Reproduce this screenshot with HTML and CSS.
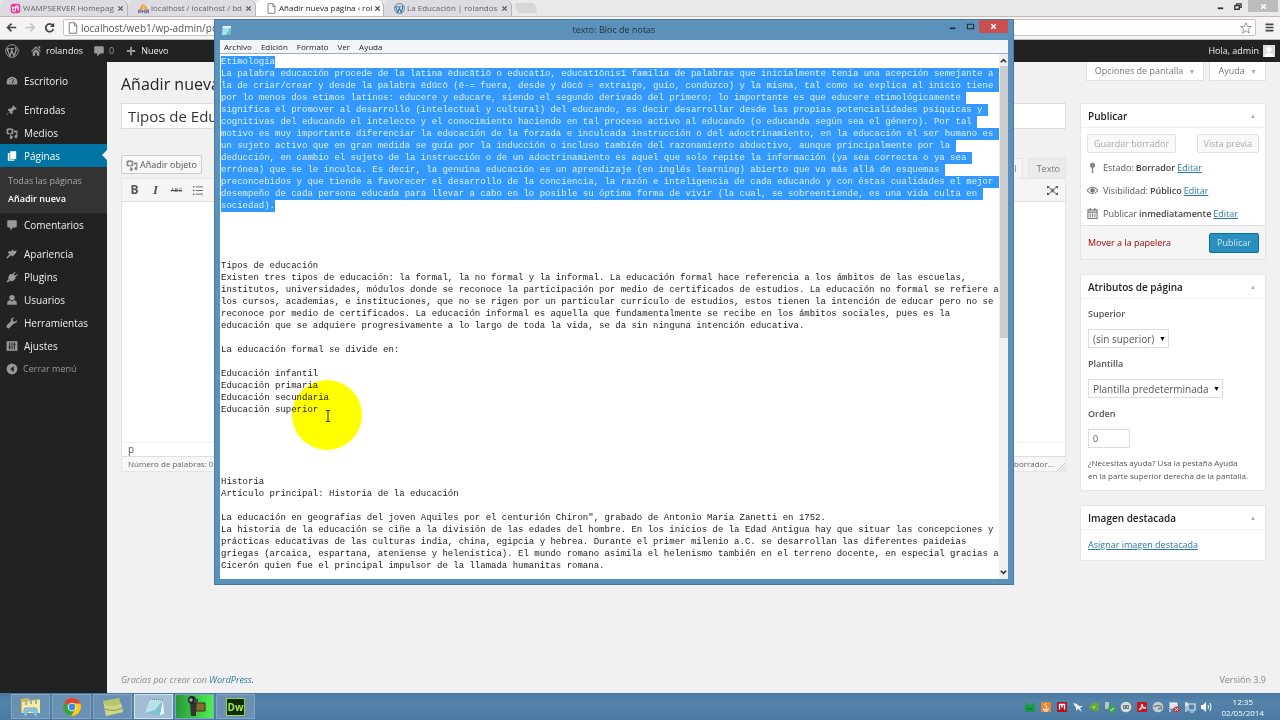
FILE: index.html
```html
<!DOCTYPE html>
<html lang="es">
<head>
<meta charset="utf-8">
<title>Añadir nueva página ‹ rolandos</title>
<link rel="stylesheet" href="styles.css">
</head>
<body>
<svg class="defs" aria-hidden="true">
  <symbol id="doc" viewBox="0 0 16 16"><path d="M3 1h7l3 3v11H3z M10 1v4h3" fill="#fff" stroke="#777" stroke-width="1.3"/></symbol>
  <symbol id="wp" viewBox="0 0 20 20"><circle cx="10" cy="10" r="9" fill="none" stroke="currentColor" stroke-width="1.400"/><path d="M2.800 6.500L7 17l2.800-7.500L13 17l2.500-7q1-3-1-5.500M2.800 6.700h4M8 6.700h4.500M8.500 6.700L10 10" fill="none" stroke="currentColor" stroke-width="1.900"/></symbol>
  <symbol id="comment" viewBox="0 0 20 20"><path d="M4 2h12q2 0 2 2v8q0 2-2 2h-4l-5 5v-5H4q-2 0-2-2V4q0-2 2-2z" fill="currentColor"/></symbol>
  <symbol id="media" viewBox="0 0 20 20"><path d="M1 3h2l1-1h4l1 1h3v9H1z M6.500 4.500a3 3 0 1 0 .1 0" fill="currentColor" fill-rule="evenodd"/><path d="M13 6h6v10a2.500 2.500 0 1 1-2-2.400V9h-4zM9 13v2h2v2.500a2.300 2.300 0 1 1-4-1.500V13z" fill="currentColor"/></symbol>
</svg>

<header class="tabstrip">
  <div class="tab"><svg viewBox="0 0 16 16"><rect x="1" y="1" width="14" height="14" rx="4" fill="#e5399c"/><path d="M4 5v5q0 2 2 2t2-2V6q0-2 2-2t2 2v5M4 7h8" fill="none" stroke="#fff" stroke-width="1.500"/></svg><span>WAMPSERVER Homepag</span><button aria-label="Cerrar"><svg viewBox="0 0 8 8"><path d="M1.500 1.500l5 5m0-5l-5 5" stroke="#555" stroke-width="1.400"/></svg></button></div>
  <div class="tab"><svg viewBox="0 0 16 16"><path d="M3 9Q4 2 8 1v8zM9 2q5 3 4 7H9z" fill="#f3a52c"/><path d="M1 15v-5h3v3H1M6 15v-5l2 3 2-3v5M12 15v-5h3v5M12 13h3" fill="none" stroke="#5d5f8d" stroke-width="1.400"/></svg><span>localhost / localhost / bd</span><button aria-label="Cerrar"><svg viewBox="0 0 8 8"><path d="M1.500 1.500l5 5m0-5l-5 5" stroke="#555" stroke-width="1.400"/></svg></button></div>
  <div class="tab active"><svg><use href="#doc"/></svg><span>Añadir nueva página ‹ rol</span><button aria-label="Cerrar"><svg viewBox="0 0 8 8"><path d="M1.500 1.500l5 5m0-5l-5 5" stroke="#444" stroke-width="1.400"/></svg></button></div>
  <div class="tab"><svg class="blue"><use href="#wp"/></svg><span>La Educación | rolandos</span><button aria-label="Cerrar"><svg viewBox="0 0 8 8"><path d="M1.500 1.500l5 5m0-5l-5 5" stroke="#555" stroke-width="1.400"/></svg></button></div>
  <button class="newtab" aria-label="Nueva pestaña"></button>
  <div class="chrome-controls">
    <button aria-label="Minimizar"><svg viewBox="0 0 10 10"><path d="M2 7h6" stroke="#333" stroke-width="2"/></svg></button>
    <button aria-label="Restaurar"><svg viewBox="0 0 10 10"><path d="M2 4h5v4H2zM4 4V2h5v4H7" fill="none" stroke="#333" stroke-width="1.500"/></svg></button>
    <button class="close" aria-label="Cerrar"><svg viewBox="0 0 10 10"><path d="M2.500 2.500l5 5m0-5l-5 5" stroke="#fff" stroke-width="1.700"/></svg></button>
  </div>
</header>

<div class="toolbar">
  <button aria-label="Atrás"><svg viewBox="0 0 14 14"><path d="M13 7H3M7 2L2 7l5 5" fill="none" stroke="#444" stroke-width="2.200"/></svg></button>
  <button aria-label="Adelante"><svg viewBox="0 0 14 14"><path d="M1 7h10M7 2l5 5-5 5" fill="none" stroke="#c4c4c4" stroke-width="2"/></svg></button>
  <button aria-label="Recargar"><svg viewBox="0 0 14 14"><path d="M11 4a5 5 0 1 0 1 5" fill="none" stroke="#444" stroke-width="2.200"/><path d="M13 1v5.500H7.500z" fill="#444"/></svg></button>
  <div class="omnibox"><svg><use href="#doc"/></svg><input aria-label="Dirección" value="localhost/web1/wp-admin/post-new.php?post_type=page"><svg class="star" viewBox="0 0 16 16"><path d="M8 1l2 5h5l-4 3.500L12.500 15 8 11.500 3.500 15 5 9.500 1 6h5z" fill="#fff" stroke="#777"/></svg></div>
  <button aria-label="Menú"><svg viewBox="0 0 14 14"><path d="M2 3h10M2 7h10M2 11h10" stroke="#444" stroke-width="2.200"/></svg></button>
</div>

<nav class="adminbar">
  <a href="#" aria-label="WordPress"><svg class="big"><use href="#wp"/></svg></a>
  <a href="#" class="site"><svg viewBox="0 0 20 20"><path d="M10 2l8 8-1 1.500-7-6.500-7 6.500L2 10zM14 2h3v5l-3-3z" fill="currentColor"/><path d="M10 7l5.500 5v6h-4v-5h-3v5h-4v-6z" fill="currentColor"/></svg>rolandos</a>
  <a href="#" class="count"><svg><use href="#comment"/></svg>0</a>
  <a href="#" class="new"><svg viewBox="0 0 20 20"><path d="M10 3v14M3 10h14" stroke="currentColor" stroke-width="3"/></svg>Nuevo</a>
  <a href="#" class="user">Hola, admin<svg viewBox="0 0 12 12"><path d="M0 0h12v12H0z" fill="#ddd"/><circle cx="6" cy="4.500" r="2.500" fill="#fff"/><path d="M1.500 12q0-4 4.500-4t4.500 4z" fill="#fff"/></svg></a>
</nav>

<div class="page">
  <nav class="menu">
    <a href="#"><svg viewBox="0 0 20 20"><path d="M10 3a9 9 0 0 0-8 13h16A9 9 0 0 0 10 3z" fill="currentColor"/><path d="M10 14l3-7M5 12h1M6 7l1 1M10 5v2M14 12h1" stroke="#222" stroke-width="1.600"/></svg>Escritorio</a>
    <a href="#" class="sep"><svg viewBox="0 0 20 20"><path d="M12 2l6 6-2 1-2 0-3 3 0 4-2 1-3.500-3.500L2 18l-1-1 5-4L3 10l1-2h4l3-3V3z" fill="currentColor"/></svg>Entradas</a>
    <a href="#"><svg><use href="#media"/></svg>Medios</a>
    <a href="#" class="current"><svg viewBox="0 0 20 20"><path d="M7 2h10v13H7z" fill="#fff"/><path d="M3 5h3v11h8v2H3z" fill="#fff"/></svg>Páginas</a>
    <div class="submenu"><a href="#">Todas las páginas</a><a href="#" class="on">Añadir nueva</a></div>
    <a href="#"><svg><use href="#comment"/></svg>Comentarios</a>
    <a href="#" class="sep"><svg viewBox="0 0 20 20"><path d="M10 2l3 3 5-1-2 5-5 5-3-2-6 6-1-2 5-6-3-2 2-3 4 1z" fill="currentColor"/></svg>Apariencia</a>
    <a href="#"><svg viewBox="0 0 20 20"><path d="M11 5l4-4 1 1-3 4 2 2 4-3 1 1-4 4q0 6-7 7l-2-1-4 3-2-2 3-3q-1-5 3-9z" fill="currentColor"/></svg>Plugins</a>
    <a href="#"><svg viewBox="0 0 20 20"><circle cx="10" cy="6" r="4.500" fill="currentColor"/><path d="M2 18v-4q0-3 5-4l3 3 3-3q5 1 5 4v4z" fill="currentColor"/></svg>Usuarios</a>
    <a href="#"><svg viewBox="0 0 20 20"><path d="M18 5l-3 3-3-1-1-3 3-3q-6-1-6 6L1 14q-1 2 1 4t4 0l7-7q6 0 5-6z" fill="currentColor"/></svg>Herramientas</a>
    <a href="#"><svg viewBox="0 0 20 20"><path d="M1 2h18v16H1z" fill="currentColor"/><path d="M6 4v12M14 4v12M10 4v12M4 12h4M12 7h4" stroke="#222" stroke-width="1.700"/></svg>Ajustes</a>
    <button class="collapse"><svg viewBox="0 0 20 20"><circle cx="10" cy="10" r="9" fill="currentColor"/><path d="M13 5v10l-6-5z" fill="#222"/></svg>Cerrar menú</button>
  </nav>

  <main class="content">
    <div class="head">
      <h1>Añadir nueva página</h1>
      <button class="meta">Opciones de pantalla <i>▼</i></button>
      <button class="meta">Ayuda <i>▼</i></button>
    </div>
    <div class="columns">
      <section class="editor-col">
        <input class="title" aria-label="Título" value="Tipos de Educación">
        <div class="media-row">
          <button class="add"><svg><use href="#media"/></svg>Añadir objeto</button>
          <div class="modes"><button class="sel-mode">Visual</button><button>Texto</button></div>
        </div>
        <div class="editor">
          <div class="format">
            <button class="b">B</button><button class="i">I</button><button class="abc">ABC</button>
            <button aria-label="Lista"><svg viewBox="0 0 12 12"><path d="M4 2h8M4 6h8M4 10h8" stroke="#666"/><path d="M1 2h1.500M1 6h1.500M1 10h1.500" stroke="#666" stroke-width="1.600"/></svg></button>
            <button class="full" aria-label="Pantalla completa"><svg viewBox="0 0 12 12"><path d="M0 1v3l3-3zM12 1v3L9 1zM0 11V8l3 3zM12 11V8l-3 3z" fill="#555"/><path d="M1 2l3 2M11 2L8 4M1 10l3-2M11 10L8 8" stroke="#555"/><path d="M4 4h4v4H4z" fill="#777"/></svg></button>
          </div>
          <div class="canvas"></div>
          <div class="path">p</div>
          <div class="status"><span>Número de palabras: 0</span><span>Guardando borrador...</span><svg viewBox="0 0 10 10"><path d="M0 10L10 0M4 10l6-6M8 10l2-2" stroke="#bbb"/></svg></div>
        </div>
      </section>

      <aside class="side">
        <section class="box">
          <h2>Publicar<i>▲</i></h2>
          <div class="publish">
            <div class="row"><button class="ghost">Guardar borrador</button><button class="ghost">Vista previa</button></div>
            <p><svg viewBox="0 0 12 12"><circle cx="6" cy="3.500" r="2.800" fill="#888"/><path d="M6 5v7" stroke="#888" stroke-width="1.600"/></svg>Estado: <b>Borrador</b> <a href="#">Editar</a></p>
            <p><svg viewBox="0 0 12 12"><path d="M0 6q6-7 12 0-6 7-12 0z" fill="none" stroke="#777" stroke-width="1.200"/><circle cx="6" cy="6" r="2.500" fill="#777"/></svg>Visibilidad: <b>Público</b> <a href="#">Editar</a></p>
            <p><svg viewBox="0 0 12 12"><path d="M1 2h10v9.500H1zM1 4.500h10M3.500 0v3M8.500 0v3M3.500 6v4M6 6v4M8.500 6v4" fill="none" stroke="#777" stroke-width="1.200"/></svg>Publicar <b>inmediatamente</b> <a href="#">Editar</a></p>
          </div>
          <div class="actions"><a href="#">Mover a la papelera</a><button class="primary">Publicar</button></div>
        </section>
        <section class="box">
          <h2>Atributos de página<i>▲</i></h2>
          <div class="attrs">
            <label for="parent">Superior</label>
            <div class="pick"><select id="parent"><option>(sin superior)</option></select><i>▼</i></div>
            <label for="tpl">Plantilla</label>
            <div class="pick"><select id="tpl"><option>Plantilla predeterminada</option></select><i>▼</i></div>
            <label for="order">Orden</label>
            <input id="order" value="0">
            <p>¿Necesitas ayuda? Usa la pestaña Ayuda<br>en la parte superior derecha de la pantalla.</p>
          </div>
        </section>
        <section class="box">
          <h2>Imagen destacada<i>▲</i></h2>
          <div class="thumb"><a href="#">Asignar imagen destacada</a></div>
        </section>
      </aside>
    </div>
    <footer><em>Gracias por crear con <a href="#">WordPress.</a></em><span>Versión 3.9</span></footer>
  </main>
</div>

<section class="notepad" aria-label="Bloc de notas">
  <div class="titlebar">
    <svg class="app" viewBox="0 0 12 12"><path d="M2 1h9l-1 10H1z" fill="#a9e0e6"/><path d="M2 1h9l-.3 2H1.800z" fill="#e8f6f6"/><path d="M10.500 3L10 11H5z" fill="#6dbccb"/></svg>
    <h2>texto: Bloc de notas</h2>
    <div class="controls">
      <button aria-label="Minimizar"><svg viewBox="0 0 10 10"><path d="M2 7h6" stroke="#1c2c3a" stroke-width="1.800"/></svg></button>
      <button aria-label="Maximizar"><svg viewBox="0 0 10 10"><path d="M1.500 2.500h7v5h-7zM1 2.500h8" fill="none" stroke="#1c2c3a" stroke-width="1.200"/></svg></button>
      <button class="close" aria-label="Cerrar"><svg viewBox="0 0 10 10"><path d="M2.500 2.500l5 5m0-5l-5 5" stroke="#fff" stroke-width="1.700"/></svg></button>
    </div>
  </div>
  <div class="menubar"><button>Archivo</button><button>Edición</button><button>Formato</button><button>Ver</button><button>Ayuda</button></div>
  <div class="pane">
    <div class="text">
<div class="picked"><span>Etimología</span>
<span>La palabra educación procede de la latina ēducātiō o educatīo, educatīōnis1 familia de palabras que inicialmente tenía una acepción semejante a </span>
<span>la de criar/crear y desde la palabra ēdūcō (ē-= fuera, desde y dūcō = extraigo, guío, conduzco) y la misma, tal como se explica al inicio tiene </span>
<span>por lo menos dos etimos latinos: educere y educare, siendo el segundo derivado del primero; lo importante es que educere etimológicamente </span>
<span>significa el promover al desarrollo (intelectual y cultural) del educando, es decir desarrollar desde las propias potencialidades psíquicas y </span>
<span>cognitivas del educando el intelecto y el conocimiento haciendo en tal proceso activo al educando (o educanda según sea el género). Por tal </span>
<span>motivo es muy importante diferenciar la educación de la forzada e inculcada instrucción o del adoctrinamiento, en la educación el ser humano es </span>
<span>un sujeto activo que en gran medida se guía por la inducción o incluso también del razonamiento abductivo, aunque principalmente por la </span>
<span>deducción, en cambio el sujeto de la instrucción o de un adoctrinamiento es aquel que solo repite la información (ya sea correcta o ya sea </span>
<span>errónea) que se le inculca. Es decir, la genuina educación es un aprendizaje (en inglés learning) abierto que va más allá de esquemas </span>
<span>preconcebidos y que tiende a favorecer el desarrollo de la conciencia, la razón e inteligencia de cada educando y con éstas cualidades el mejor </span>
<span>desempeño de cada persona educada para llevar a cabo en lo posible su óptima forma de vivir (la cual, se sobreentiende, es una vida culta en </span>
<span>sociedad).</span></div>
<pre>




Tipos de educación
Existen tres tipos de educación: la formal, la no formal y la informal. La educación formal hace referencia a los ámbitos de las escuelas,
institutos, universidades, módulos donde se reconoce la participación por medio de certificados de estudios. La educación no formal se refiere a
los cursos, academias, e instituciones, que no se rigen por un particular currículo de estudios, estos tienen la intención de educar pero no se
reconoce por medio de certificados. La educación informal es aquella que fundamentalmente se recibe en los ámbitos sociales, pues es la
educación que se adquiere progresivamente a lo largo de toda la vida, se da sin ninguna intención educativa.

La educación formal se divide en:

Educación infantil
Educación primaria
Educación secundaria
Educación superior





Historia
Artículo principal: Historia de la educación

La educación en geografías del joven Aquiles por el centurión Chiron", grabado de Antonio María Zanetti en 1752.
La historia de la educación se ciñe a la división de las edades del hombre. En los inicios de la Edad Antigua hay que situar las concepciones y
prácticas educativas de las culturas india, china, egipcia y hebrea. Durante el primer milenio a.C. se desarrollan las diferentes paideias
griegas (arcaica, espartana, ateniense y helenística). El mundo romano asimila el helenismo también en el terreno docente, en especial gracias a
Cicerón quien fue el principal impulsor de la llamada humanitas romana.</pre>
    </div>
    <div class="scroll">
      <svg viewBox="0 0 10 10"><path d="M2 7l3-3 3 3" fill="none" stroke="#333" stroke-width="1.800"/></svg>
      <div class="handle"></div>
      <svg viewBox="0 0 10 10"><path d="M2 3l3 3 3-3" fill="none" stroke="#333" stroke-width="1.800"/></svg>
    </div>
  </div>
</section>
<div class="halo"></div>
<svg class="ibeam" viewBox="0 0 6 12"><path d="M1 .5h1.500l.5.500.500-.500H5M3 1v10M1 11.500h1.500l.5-.500.500.500H5" fill="none" stroke="#222"/></svg>

<footer class="taskbar">
  <button aria-label="Explorador"><svg viewBox="0 0 24 22"><path d="M2 3l7-1 2 2 10-1v14H2z" fill="#d9b653"/><path d="M3 6l18-2v13H3z" fill="#f7e9a2"/><path d="M6 5h2v4H6zM11 4h2v4h-2zM16 4h2v4h-2z" fill="#8fb7a3"/><path d="M5 20v-6q0-2 2-2h9q2 0 2 2v6h-3v-5H8v5z" fill="#8ccbea" stroke="#5ea4cd"/></svg></button>
  <button aria-label="Chrome"><svg viewBox="0 0 24 22"><circle cx="12" cy="11" r="9" fill="#fbc816"/><path d="M12 11L4.200 6.500A9 9 0 0 1 20.300 7.500H12z" fill="#dd4435"/><path d="M4.200 6.500A9 9 0 0 0 11 20l4.500-7L12 11z" fill="#3d9f48"/><circle cx="12" cy="11" r="4.300" fill="#fff"/><circle cx="12" cy="11" r="3.400" fill="#438bd5"/></svg></button>
  <button aria-label="Notas"><svg viewBox="0 0 24 22"><path d="M2 5l16-3 4 14-17 4z" fill="#b9c56a"/><path d="M3 8q8 5 17-1l2 9-17 4z" fill="#cbd68b"/><path d="M4 13q8 3 17-1" stroke="#8b9a45" fill="none"/></svg></button>
  <button class="lit" aria-label="Bloc de notas"><svg viewBox="0 0 24 22"><path d="M8 3l13 1-3 15-15-2z" fill="#7bc3d3"/><path d="M8 3l13 1-8 10-10 3z" fill="#b7e2e8"/><path d="M18 19l4-1-1-14z" fill="#eef6f7"/><path d="M8 3l13 1" stroke="#557a88" stroke-dasharray="1 1"/></svg></button>
  <button class="rec" aria-label="Grabadora"><svg viewBox="0 0 24 22"><path d="M7 7h6v13H8z" fill="#333"/><circle cx="9" cy="4" r="4" fill="#252525"/><circle cx="8" cy="4" r="1.700" fill="#9aa"/><path d="M13 7h9v8h-9z" fill="#856c2d" stroke="#3c3214"/><path d="M11 3h4v4h-4z" fill="#444"/></svg></button>
  <button aria-label="Dreamweaver"><span class="dw">Dw</span></button>
  <div class="tray">
    <svg viewBox="0 0 12 12"><path d="M1 1l4 3h2l4-3v10H1z" fill="#1e9a45"/><path d="M3 8h6" stroke="#0d6d2d"/></svg>
    <svg viewBox="0 0 12 12"><path d="M1 1h10v10H1z" fill="#e68733"/><path d="M6 2q-2 2 0 3t0 2M3 8q3 1 6 0M4 10h4" stroke="#fff" fill="none"/></svg>
    <svg viewBox="0 0 12 12"><path d="M1 1h10v10H1z" fill="#b3151b"/><path d="M3.500 8.500V3.500h5v5M6 3.500v3" stroke="#fff" fill="none" stroke-width="1.300"/></svg>
    <svg viewBox="0 0 12 12"><path d="M1 2l4 1 2 2 4 0-3 2 2 4-4-3-2 2V7z" fill="#e5eef5"/></svg>
    <svg viewBox="0 0 12 12"><path d="M1 6q3-5 6-4h4v8H7Q3 10 1 6z" fill="#65a63a"/><circle cx="6" cy="6" r="1.500" fill="#9acb71"/></svg>
    <svg viewBox="0 0 12 12"><path d="M1 1h4v7H1z" fill="#b8c2c9"/><circle cx="8" cy="8" r="3.700" fill="#35a540"/><path d="M6 8l1.500 1.500L10 6.500" stroke="#fff" fill="none"/></svg>
    <svg viewBox="0 0 12 12"><circle cx="6" cy="6" r="5.300" fill="#d7ded8"/><path d="M3 4h6v4H3z" fill="#76807a"/><path d="M4 6h1M7 6h1" stroke="#fff"/></svg>
    <svg viewBox="0 0 12 12"><path d="M1 1h10v10H1z" fill="#c3171d"/><path d="M3 9q3-3 3-6 0 4 4 4-4-1-7 2z" stroke="#fff" fill="none"/></svg>
    <svg viewBox="0 0 12 12"><circle cx="6" cy="6" r="5.300" fill="#c9ced0"/><path d="M2 6q4-3 8 0M6 8l4-1" stroke="#707b80" fill="none" stroke-width="1.400"/></svg>
    <svg viewBox="0 0 12 12"><path d="M2 1v10M3 2h6v5H3z" stroke="#fff" fill="#dde4e8"/><circle cx="8.500" cy="8.500" r="3" fill="#d02e37"/><path d="M7 7l3 3m0-3l-3 3" stroke="#fff"/></svg>
    <svg viewBox="0 0 12 12"><path d="M4 3h7v6H4zM6 11h4M2 1v10M1 2h2v2H1" fill="none" stroke="#e2edf4" stroke-width="1.200"/></svg>
    <svg viewBox="0 0 12 12"><path d="M1 4h2l3-3v10L3 8H1z" fill="#fff"/><path d="M8 4q1 2 0 4M10 2q2 4 0 8" fill="none" stroke="#fff"/></svg>
  </div>
  <time>12:35<br>02/05/2014</time>
</footer>
</body>
</html>
```
FILE: styles.css
```css
* { box-sizing: border-box; }
html, body { height: 100%; }
body {
  margin: 0;
  display: flex;
  flex-direction: column;
  position: relative;
  overflow: hidden;
  font: 10px/12px "Open Sans", "Noto Sans", sans-serif;
  color: #555;
  background: #f1f1f1;
}
button, input, select { font: inherit; color: inherit; margin: 0; padding: 0; border: 0; background: none; }
h1, h2, p, pre { margin: 0; font-weight: 400; }
a { color: inherit; text-decoration: none; }
i { font-style: normal; }
svg { width: 12px; height: 12px; flex: none; display: block; }
.defs { position: absolute; width: 0; height: 0; }

/* Browser frame */
.tabstrip { height: 17px; flex: none; display: flex; align-items: stretch; background: #e9e9eb; border-bottom: 1px solid #c7b7b7; font-size: 8px; color: #666; }
.tab { width: 128px; display: flex; align-items: center; gap: 2px; padding: 0 1px 0 10px; background: #dcdce2; border-right: 1px solid #b5b5b5; border-radius: 6px 6px 0 0; }
.tab svg { width: 11px; height: 11px; }
.tab span { flex: 1; white-space: nowrap; }
.tab button svg { width: 7px; height: 7px; }
.tab button { width: 9px; }
.tab.active { background: #fff; color: #222; }
.blue { color: #2f6d9c; }
.newtab { width: 20px; margin: 3px 4px; background: #d6d6da; border-radius: 3px; transform: skewX(20deg); }
.chrome-controls { margin-left: auto; display: flex; padding-right: 2px; }
.chrome-controls button { width: 17px; height: 12px; display: grid; place-items: center; }
.chrome-controls svg { width: 9px; height: 9px; }
.chrome-controls .close { width: 30px; background: #bcbcbc; margin-left: 2px; }

.toolbar { height: 23px; flex: none; display: flex; align-items: center; gap: 8px; padding: 2px 5px 3px 6px; background: #f4f4f4; border-bottom: 1px solid #bbb; }
.toolbar > button svg { width: 11px; height: 11px; }
.omnibox { flex: 1; height: 17px; display: flex; align-items: center; gap: 2px; padding: 0 3px; background: #fff; border: 1px solid #c4c4c4; border-radius: 2px; }
.omnibox input { flex: 1; font-size: 10px; outline: 0; }

.adminbar { height: 22px; flex: none; display: flex; align-items: center; padding: 0 5px 0 5px; background: #222; color: #eee; font-size: 9px; }
.adminbar a { display: flex; align-items: center; gap: 4px; }
.adminbar svg { color: #999; }
.adminbar .big { width: 14px; height: 14px; }
.site { margin-left: 11px; }
.count { margin-left: 10px; }
.adminbar .count { color: #999; }
.new { margin-left: 11px; }
.adminbar .user { margin-left: auto; }

/* Administration page */
.page { flex: 1; min-height: 0; display: flex; }
.menu { width: 107px; flex: none; padding-top: 7px; background: #222; color: #eee; }
.menu > a, .collapse { height: 23px; display: flex; align-items: center; gap: 6px; padding-left: 6px; }
.menu svg { color: #999; }
.menu .sep { margin-top: 6px; }
.menu .current { position: relative; height: 23px; background: #0074a2; color: #fff; }
.current::after { content: ""; position: absolute; right: 0; top: 6px; border: 5px solid transparent; border-right-color: #f1f1f1; border-left: 0; }
.submenu { padding: 5px 8px; background: #333; color: #aaa; font-size: 9px; }
.submenu a { display: block; line-height: 18px; white-space: nowrap; }
.submenu .on { color: #fff; font-weight: 600; }
.menu .collapse { color: #999; font-size: 9px; gap: 5px; }

.content { flex: 1; min-width: 0; display: flex; flex-direction: column; padding: 0 14px; font-size: 9px; }
.head { height: 41px; flex: none; display: flex; align-items: flex-start; gap: 5px; }
h1 { flex: 1; font-size: 16px; line-height: 20px; margin-top: 12px; color: #222; }
.meta { height: 19px; padding: 0 8px; background: #fff; color: #777; border: 1px solid #e1e1e1; border-top: 0; font-size: 9px; }
.meta i { margin-left: 3px; font-size: 7px; color: #aaa; }
.columns { display: flex; align-items: flex-start; gap: 14px; }
.editor-col { flex: 1; min-width: 0; }
.title { display: block; width: 100%; height: 26px; padding: 0 6px; font-size: 15px; color: #333; background: #fff; border: 1px solid #ddd; }
.media-row { display: flex; align-items: flex-end; justify-content: space-between; margin-top: 26px; height: 23px; }
.add { height: 19px; display: flex; align-items: center; gap: 2px; padding: 0 4px; margin-bottom: 4px; border: 1px solid #ccc; background: #f7f7f7; border-radius: 2px; }
.add svg { color: #888; }
.modes { display: flex; gap: 5px; }
.modes button { height: 20px; padding: 0 5px 0 8px; background: #ebebeb; border: 1px solid #e5e5e5; border-bottom: 0; color: #777; }
.modes .sel-mode { background: #f5f5f5; }
.editor { background: #fff; border: 1px solid #e5e5e5; }
.format { height: 23px; display: flex; align-items: center; gap: 4px; padding: 0 4px; background: #f5f5f5; border-bottom: 1px solid #dedede; }
.format button { width: 17px; display: grid; place-items: center; font-size: 12px; color: #555; }
.format svg { width: 11px; height: 11px; }
.format .b { font-weight: 700; }
.format .i { font-family: "Liberation Serif", serif; font-style: italic; font-weight: 700; font-size: 13px; }
.format .abc { font-size: 6px; text-decoration: line-through; }
.format .full { margin-left: auto; }
.canvas { height: 240px; }
.path { height: 14px; padding: 0 6px; border-top: 1px solid #eee; font-size: 10px; }
.status { height: 15px; display: flex; align-items: center; padding-left: 6px; background: #f7f7f7; border-top: 1px solid #dedede; font-size: 8px; color: #666; }
.status span + span { margin-left: auto; padding-right: 3px; }
.status svg { width: 8px; height: 8px; align-self: flex-end; }

.side { width: 186px; flex: none; display: flex; flex-direction: column; gap: 14px; }
.box { background: #fff; border: 1px solid #e5e5e5; }
.box h2 { height: 24px; display: flex; align-items: center; justify-content: space-between; padding: 0 9px 0 7px; border-bottom: 1px solid #eee; font-size: 10px; font-weight: 600; color: #222; }
.box h2 i { font-size: 6px; color: #aaa; }
.publish { padding: 6px 6px 0; }
.publish p { height: 23px; display: flex; align-items: center; gap: 2px; }
.publish p svg { margin-right: 3px; width: 11px; height: 11px; }
.publish b { font-weight: 600; color: #444; }
.publish a, .thumb a { color: #2a7ba0; text-decoration: underline; }
.row { display: flex; justify-content: space-between; margin-bottom: 3px; }
.ghost { height: 19px; padding: 0 6px; border: 1px solid #e1e1e1; background: #f9f9f9; border-radius: 2px; color: #aaa; }
.actions { height: 34px; display: flex; align-items: center; justify-content: space-between; padding: 0 6px 0 7px; background: #f5f5f5; border-top: 1px solid #ddd; }
.actions a { color: #a00; }
.primary { height: 20px; padding: 0 7px; background: #2a8fbf; border: 1px solid #0074a2; border-radius: 2px; color: #cde8f5; }
.attrs { display: flex; flex-direction: column; align-items: flex-start; padding: 9px 7px 8px; }
.attrs label { font-weight: 600; line-height: 12px; margin-bottom: 9px; }
.pick { display: grid; align-items: center; margin-bottom: 10px; }
.pick > * { grid-area: 1 / 1; }
.pick select { appearance: none; height: 19px; padding: 0 13px 0 4px; border: 1px solid #ddd; background: #fff; font-size: 10px; }
.pick i { justify-self: end; margin-right: 3px; font-size: 7px; color: #000; pointer-events: none; }
#order { width: 42px; height: 19px; padding: 0 4px; border: 1px solid #ddd; margin-bottom: 8px; }
.attrs p { font-size: 8px; line-height: 13px; white-space: nowrap; }
.thumb { padding: 9px 7px; }
.content footer { margin-top: auto; display: flex; justify-content: space-between; padding-bottom: 7px; color: #888; }
.content footer a { color: #2a7ba0; }

/* Notepad window */
.notepad { position: absolute; left: 214px; top: 19px; width: 800px; height: 566px; display: flex; flex-direction: column; padding: 0 5px 5px; background: #5c92b9; border: 1px solid #447ba6; }
.titlebar { height: 20px; flex: none; display: grid; grid-template-columns: 1fr auto 1fr; align-items: center; }
.titlebar h2 { font-size: 9px; color: #1e3040; }
.app { width: 11px; height: 11px; margin-left: 1px; }
.controls { justify-self: end; align-self: start; display: flex; }
.controls button { width: 18px; height: 13px; display: grid; place-items: center; }
.controls svg { width: 9px; height: 9px; }
.controls .close { width: 29px; background: #c94f50; }
.menubar { height: 14px; flex: none; display: flex; align-items: center; gap: 9px; padding: 0 4px; background: #f4f5f8; border-bottom: 1px solid #8fb0c8; font-size: 8px; color: #222; }
.pane { flex: 1; min-height: 0; display: flex; background: #fff; }
.text { flex: 1; min-width: 0; padding: 2px 0 0 1px; overflow: hidden; }
.picked { display: flex; flex-direction: column; align-items: flex-start; }
.picked span { background: #3399ff; color: #d9f2ff; }
.picked span, .text pre { font: 9px/12px "Liberation Mono", monospace; white-space: pre; }
.text pre { color: #222; }
.scroll { width: 9px; flex: none; display: flex; flex-direction: column; align-items: center; padding: 1px 0; background: #f0f0f0; }
.scroll svg { width: 9px; height: 11px; }
.scroll .handle { width: 8px; height: 52%; margin-bottom: auto; background: #cdcdcd; }

/* Pointer */
.halo { position: absolute; left: 292px; top: 380px; width: 70px; height: 70px; border-radius: 50%; background: #ff0; mix-blend-mode: multiply; }
.ibeam { position: absolute; left: 325px; top: 410px; width: 6px; height: 12px; }

/* Taskbar */
.taskbar { height: 27px; flex: none; display: flex; align-items: center; gap: 2px; padding: 0 16px 0 11px; background: linear-gradient(#4879a3, #5583aa 30%, #4a79a2); color: #fff; }
.taskbar button { width: 39px; height: 25px; display: grid; place-items: center; border: 1px solid #85a6c2; background: #6a91b3; }
.taskbar button svg { width: 24px; height: 22px; }
.taskbar .lit { background: #a3bdd2; border-color: #d5e2ec; }
.taskbar .rec { background: linear-gradient(to right, #279a3c, #4cf04c); }
.dw { width: 19px; height: 18px; background: #13290a; border: 1px solid #8dd63b; color: #a3e84e; font-size: 10px; font-weight: 700; line-height: 16px; }
.tray { margin-left: auto; display: flex; gap: 4px; margin-right: 8px; }
time { font-size: 8px; line-height: 11px; text-align: center; }
```
